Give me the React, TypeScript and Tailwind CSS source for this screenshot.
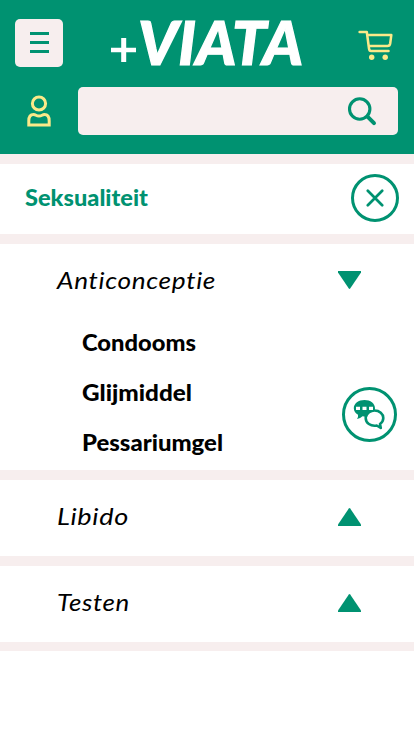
import React from "react";

function UserIcon() {
  return (
    <svg width="26" height="34" viewBox="0 0 26 34" fill="none" stroke="#fbe989" strokeWidth="3">
      <circle cx="13" cy="9.500" r="6.600" />
      <path d="M2.800 31.100V27C2.800 23 4 20.500 7.500 20.500C10 20.500 10 22 13 22S16 20.500 18.500 20.500C22 20.500 23.200 23 23.200 27V31.100Z" />
    </svg>
  );
}

function CartIcon() {
  return (
    <svg width="36" height="32" viewBox="0 0 36 32" fill="none" stroke="#fbe989" strokeWidth="2.500" strokeLinecap="round" strokeLinejoin="round">
      <path d="M1.600 3H8.800L11 19.500Q11.300 22 13 22H30.500" />
      <path d="M10 6H33.300L32.200 14.500Q31.800 17 29.500 17H11.500" />
      <circle cx="13.700" cy="28.300" r="2.700" fill="#fbe989" stroke="none" />
      <circle cx="27.200" cy="28.300" r="2.700" fill="#fbe989" stroke="none" />
    </svg>
  );
}

function ChatIcon() {
  return (
    <svg width="33" height="32" viewBox="0 0 33 32" className="shrink-0">
      <path fill="#009271" d="M11.500 1C17.500 1 22 4.500 22 9.200S17.500 17.500 11.500 17.500L9.500 17.300Q7.500 19.500 4 20Q5.500 18 5 15.700C2.500 14.200.8 12 .8 9.200C.8 4.500 5.500 1 11.500 1Z" />
      <path fill="#fff" stroke="#009271" strokeWidth="2.600" strokeLinejoin="round" d="M21.500 11.500C26.500 11.500 30.300 14.800 30.300 19C30.300 21.500 29 23.600 27 25L27.800 29L23.700 26.500C17.500 27.500 12.700 24 12.700 19S16.500 11.500 21.500 11.500Z" />
      <path fill="#009271" d="M12 13C15.500 10 19 9.800 22 11L20 13C17 13.500 15 15.300 14 18L11 17Z" />
      <path fill="#fff" d="M3 7.700H7V11H3ZM9.500 7.700H13.500V11H9.500ZM16 7.700H20V11H16Z" />
    </svg>
  );
}

function Arrow({ down = false }: { down?: boolean }) {
  return (
    <svg width="25" height="18" viewBox="0 0 25 18" fill="#009271" className={down ? "mb-[2px] rotate-180" : "mb-[2px]"}>
      <path d="M11.800 .4Q12.500 -.2 13.200 .4L24 16.400V18H1V16.400Z" />
    </svg>
  );
}

function Label({ text, width, className }: { text: string; width: number; className: string }) {
  return (
    <svg width={width + 4} height="36" className={`overflow-visible [font-variant-ligatures:none] ${className}`}>
      <text x="0" y="25" textLength={width} lengthAdjust="spacingAndGlyphs" fill="currentColor">{text}</text>
    </svg>
  );
}

const products = [
  { text: "Condooms", width: 114 },
  { text: "Glijmiddel", width: 110 },
  { text: "Pessariumgel", width: 141 },
];

export default function App() {
  return (
    <main className="min-h-[736px] w-full bg-white font-['Lato',sans-serif] text-black">
      <header className="h-[154px] bg-[#009271] pt-[19px]">
        <div className="flex h-12 items-center justify-between pl-[15px] pr-[20px]">
          <button aria-label="Menu" className="flex h-12 w-12 flex-col items-center justify-center gap-[6px] rounded-[5px] bg-[#f7eeee] pb-px">
            <span className="h-[3px] w-[19px] bg-[#009271]" />
            <span className="h-[3px] w-[19px] bg-[#009271]" />
            <span className="h-[3px] w-[19px] bg-[#009271]" />
          </button>
          <svg width="200" height="48" viewBox="0 0 200 48" className="mr-[14px] overflow-visible" fill="white">
            <path d="M17.200 19H22.200V43H17.200Z M7 28.800H32V33.200H7Z" />
            <text x="34" y="45.500" fontSize="61" fontWeight="900" fontStyle="italic" textLength="165" lengthAdjust="spacingAndGlyphs" stroke="white" strokeWidth="1.200">VIATA</text>
          </svg>
          <div className="pt-1"><CartIcon /></div>
        </div>
        <div className="mt-5 flex h-12 items-center pl-[26px] pr-4">
          <UserIcon />
          <div className="ml-[26px] flex h-12 flex-1 items-center justify-end rounded-[5px] bg-[#f7eeee] pr-[20px]">
            <svg width="31" height="31" viewBox="0 0 31 31" fill="none" stroke="#009271" strokeLinecap="round">
              <circle cx="12.700" cy="13" r="10.200" strokeWidth="3.100" />
              <path d="M20.500 20.700L27 27.200" strokeWidth="4" />
            </svg>
          </div>
        </div>
      </header>
      <section className="flex h-[90px] items-center justify-between border-y-[10px] border-[#f7eeee] pl-[25px] pr-[15px]">
        <Label text="Seksualiteit" width={123} className="text-[23px] font-black text-[#009271]" />
        <button aria-label="Sluiten" className="mb-[2px] flex h-12 w-12 items-center justify-center rounded-full border-[3px] border-[#009271]">
          <svg width="18" height="18" viewBox="0 0 18 18" stroke="#009271" strokeWidth="2.700" strokeLinecap="round"><path d="M1.800 1.800L16.200 16.200M16.200 1.800L1.800 16.200" /></svg>
        </button>
      </section>
      <section className="h-[236px] border-b-[10px] border-[#f7eeee]">
        <div className="flex h-[74px] items-center justify-between pl-[57px] pr-[52px]">
          <Label text="Anticonceptie" width={159} className="mt-[2px] text-[24px] italic tracking-[0.6px]" />
          <Arrow down />
        </div>
        <div className="flex justify-between pl-[82px] pr-[17px]">
          <ul className="pt-2">
            {products.map((item) => (
              <li key={item.text} className="h-[50px]">
                <Label text={item.text} width={item.width} className="text-[23px] font-black" />
              </li>
            ))}
          </ul>
          <button aria-label="Chat" className="mt-[69px] flex h-[55px] w-[55px] items-center justify-center rounded-full border-[3px] border-[#009271]"><ChatIcon /></button>
        </div>
      </section>
      <section className="flex h-[86px] items-center justify-between border-b-[10px] border-[#f7eeee] pl-[57px] pr-[52px]">
        <Label text="Libido" width={72} className="text-[24px] italic tracking-[0.6px]" />
        <Arrow />
      </section>
      <section className="flex h-[85px] items-center justify-between border-b-[9px] border-[#f7eeee] pl-[57px] pr-[52px]">
        <Label text="Testen" width={73} className="text-[24px] italic tracking-[0.6px]" />
        <Arrow />
      </section>
    </main>
  );
}
